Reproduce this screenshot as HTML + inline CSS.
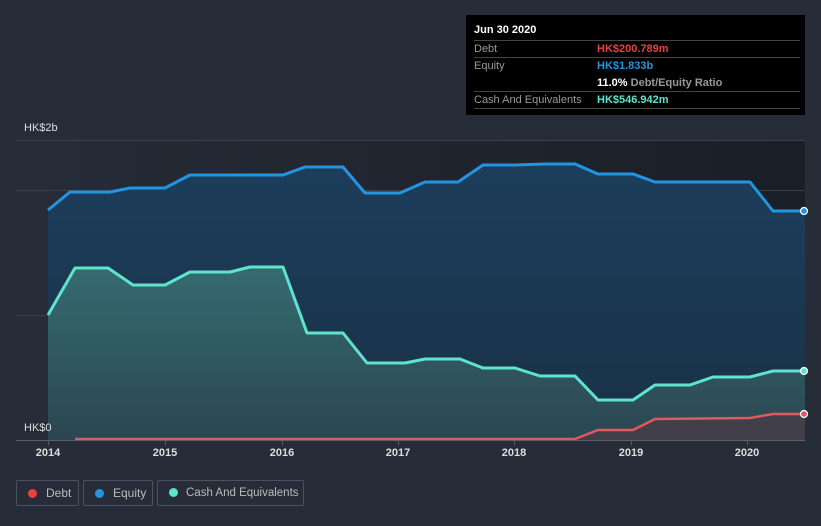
<!DOCTYPE html>
<html style="width:821px;height:526px;overflow:hidden"><head><style>
body{margin:0;width:821px;height:526px;background:#262c38;font-family:"Liberation Sans",sans-serif;overflow:hidden;position:relative}
.tt{position:absolute;left:466px;top:15px;width:339px;height:100px;background:#000;color:#fff;font-size:11px}
.row{position:absolute;left:8px;width:326px;height:17px;line-height:17px;border-top:1px solid #444}
.lab{color:#999;position:absolute;left:0}
.val{position:absolute;left:123px;font-weight:bold}
.leg{position:absolute;top:480px;height:26px;border:1px solid #4a5260;border-radius:2px;color:#bbb;font-size:12px;line-height:25px;box-sizing:border-box;white-space:nowrap;overflow:hidden}
.dot{display:inline-block;width:9px;height:9px;border-radius:50%;margin:0 9px 0 11px;vertical-align:-1px}
.yr{position:absolute;top:447px;color:#ddd;font-size:11px;font-weight:bold;transform:translateX(-50%)}
</style></head><body>
<svg width="821" height="526" style="position:absolute;left:0;top:0">
<defs>
<linearGradient id="bg" x1="0" x2="1"><stop offset="0" stop-color="#262c38"/><stop offset="1" stop-color="#1a1e26"/></linearGradient>
<linearGradient id="eq" x1="0" y1="0" x2="0" y2="1"><stop offset="0" stop-color="#1c3e5c"/><stop offset="1" stop-color="#1a3146"/></linearGradient>
<linearGradient id="ca" x1="0" y1="0" x2="0" y2="1"><stop offset="0" stop-color="#356b71"/><stop offset="1" stop-color="#2b4650"/></linearGradient>
</defs>
<rect x="16" y="140" width="789" height="300" fill="url(#bg)"/>
<line x1="16" y1="140.5" x2="805" y2="140.5" stroke="#3a404c"/>
<line x1="16" y1="190.5" x2="805" y2="190.5" stroke="#3a404c"/>
<line x1="16" y1="315.5" x2="805" y2="315.5" stroke="#3a404c"/>
<path fill="url(#eq)" d="M48,210 L70,192 110,192 130,188 165,188 190,175 283,175 305,167 343,167 365,193 400,193 425,182 458,182 483,165 515,165 545,164 575,164 598,174 633,174 655,182 750,182 773,211 805,211 L805,440 48,440Z"/>
<path fill="url(#ca)" d="M48,315 L75,268 108,268 133,285 165,285 190,272 230,272 250,267 283,267 307,333 343,333 367,363 405,363 425,359 460,359 483,368 515,368 540,376 575,376 598,400 633,400 655,385 690,385 713,377 750,377 773,371 805,371 L805,440 48,440Z"/>
<path fill="#4a3a44" d="M575,439 598,430 633,430 655,419 750,418 773,414 805,414 805,440 575,440Z" opacity="0.7"/>
<path fill="none" stroke="#2394e0" stroke-width="3" stroke-linejoin="round" d="M48,210 L70,192 110,192 130,188 165,188 190,175 283,175 305,167 343,167 365,193 400,193 425,182 458,182 483,165 515,165 545,164 575,164 598,174 633,174 655,182 750,182 773,211 805,211"/>
<path fill="none" stroke="#5ee3cc" stroke-width="3" stroke-linejoin="round" d="M48,315 L75,268 108,268 133,285 165,285 190,272 230,272 250,267 283,267 307,333 343,333 367,363 405,363 425,359 460,359 483,368 515,368 540,376 575,376 598,400 633,400 655,385 690,385 713,377 750,377 773,371 805,371"/>
<path fill="none" stroke="#e0595f" stroke-width="2.5" stroke-linejoin="round" d="M75,439 L575,439 598,430 633,430 655,419 750,418 773,414 805,414"/>
<line x1="16" y1="440.5" x2="805" y2="440.5" stroke="#5a606b"/>
<g stroke="#5a606b"><line x1="48.5" y1="440" x2="48.5" y2="445"/><line x1="165.5" y1="440" x2="165.5" y2="445"/><line x1="282.5" y1="440" x2="282.5" y2="445"/><line x1="398.5" y1="440" x2="398.5" y2="445"/><line x1="514.5" y1="440" x2="514.5" y2="445"/><line x1="631.5" y1="440" x2="631.5" y2="445"/><line x1="747.5" y1="440" x2="747.5" y2="445"/></g>
<circle cx="804" cy="211" r="3.5" fill="#2394e0" stroke="#fff" stroke-width="1.2"/>
<circle cx="804" cy="371" r="3.5" fill="#5ee3cc" stroke="#fff" stroke-width="1.2"/>
<circle cx="804" cy="414" r="3.5" fill="#e0595f" stroke="#fff" stroke-width="1.2"/>
</svg>
<div style="position:absolute;left:24px;top:122px;color:#ddd;font-size:11px">HK$2b</div>
<div style="position:absolute;left:24px;top:422px;color:#ddd;font-size:11px">HK$0</div>
<div class="yr" style="left:48px">2014</div><div class="yr" style="left:165px">2015</div><div class="yr" style="left:282px">2016</div><div class="yr" style="left:398px">2017</div><div class="yr" style="left:514px">2018</div><div class="yr" style="left:631px">2019</div><div class="yr" style="left:747px">2020</div>
<div class="tt">
<div style="position:absolute;left:8px;top:9px;font-weight:bold">Jun 30 2020</div>
<div class="row" style="top:25px"><span class="lab">Debt</span><span class="val" style="color:#e8413f">HK$200.789m</span></div>
<div class="row" style="top:42px;height:34px"><span class="lab">Equity</span><span class="val" style="color:#2394e0">HK$1.833b</span><span class="val" style="top:17px"><b>11.0%</b> <span style="color:#999;font-weight:bold">Debt/Equity Ratio</span></span></div>
<div class="row" style="top:76px"><span class="lab">Cash And Equivalents</span><span class="val" style="color:#5ee3cc">HK$546.942m</span></div>
<div class="row" style="top:93px;height:0"></div>
</div>
<div class="leg" style="left:16px;width:63px"><span class="dot" style="background:#e8413f"></span>Debt</div>
<div class="leg" style="left:83px;width:70px"><span class="dot" style="background:#2394e0"></span>Equity</div>
<div class="leg" style="left:157px;width:147px;font-size:11.5px"><span class="dot" style="background:#5ee3cc;margin-right:8px"></span>Cash And Equivalents</div>
</body></html>
